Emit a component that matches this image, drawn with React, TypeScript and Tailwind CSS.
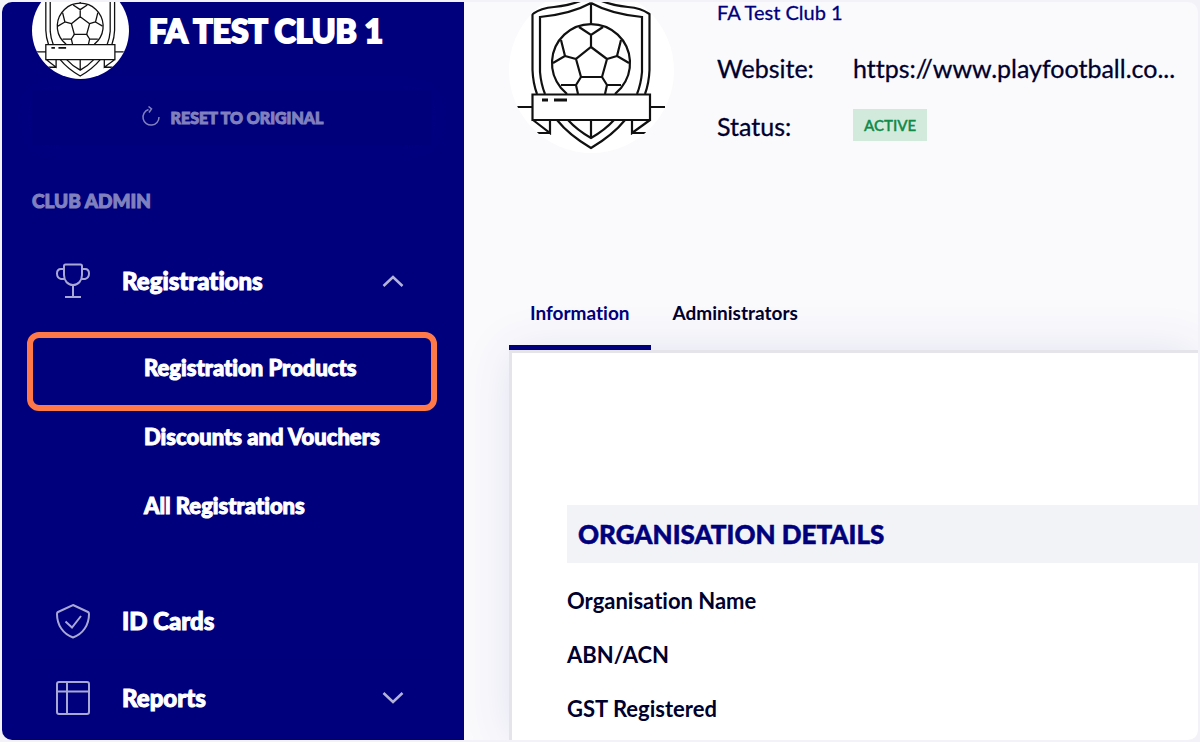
import type { ReactNode } from 'react';
import { clsx } from 'clsx';

const subItems = [
  { label: 'Registration Products', highlighted: true },
  { label: 'Discounts and Vouchers', highlighted: false },
  { label: 'All Registrations', highlighted: false },
];

const details = ['Organisation Name', 'ABN/ACN', 'GST Registered'];

export default function App() {
  return (
    <div className="flex min-h-screen bg-[#f2f2f8] p-[2px] font-['Lato','Open_Sans',sans-serif] [font-variant-ligatures:none]">
      <div className="flex flex-1 overflow-hidden rounded-[10px] bg-[#fafafd]">
        <Sidebar />
        <Organisation />
      </div>
    </div>
  );
}

function Sidebar() {
  return (
    <aside className="w-[462px] shrink-0 bg-[#00007d] pr-8 pl-[30px] text-white [-webkit-text-stroke:1px]">
      <div className="-mt-5 flex items-center gap-5">
        <Crest className="size-[97px]" />
        <h1 className="text-[32px] leading-10 font-black [-webkit-text-stroke:2px]">FA TEST CLUB 1</h1>
      </div>

      <button
        type="button"
        className="mt-[11px] flex h-[55px] w-full items-center justify-center gap-2.5 bg-[#00007a] text-base font-black text-[#8080be] shadow-[0_0_24px_#000084]"
      >
        <ResetIcon />
        RESET TO ORIGINAL
      </button>

      <h2 className="mt-11 text-[19px] leading-6 font-black text-[#8080be]">CLUB ADMIN</h2>

      <nav className="mt-[30px]">
        <NavItem label="Registrations" icon={<TrophyIcon />} chevron="up" />
        <ul className="mt-3.5 mb-[43px]">
          {subItems.map((item) => (
            <li key={item.label} className="relative">
              <a href="#" className="flex h-[69px] items-center pl-28 text-[22px] font-black">
                {item.label}
              </a>
              {item.highlighted && (
                <div className="pointer-events-none absolute -inset-x-[5px] -top-px -bottom-[9px] rounded-xl border-6 border-[#ff7847]"></div>
              )}
            </li>
          ))}
        </ul>
        <NavItem label="ID Cards" icon={<ShieldIcon />} />
        <div className="h-px bg-[#00006c]"></div>
        <NavItem label="Reports" icon={<LayoutIcon />} chevron="down" />
      </nav>
    </aside>
  );
}

function NavItem({ label, icon, chevron }: { label: string; icon: ReactNode; chevron?: 'up' | 'down' }) {
  return (
    <button type="button" className="flex h-[76px] w-full items-center pr-7 pl-6 text-left text-[24px] font-black">
      {icon}
      <span className="ml-8 flex-1">{label}</span>
      {chevron && (
        <svg viewBox="0 0 22 14" className={clsx('w-[22px] fill-none stroke-[#b3b3d8] stroke-[2.5]', chevron === 'down' && 'rotate-180')}>
          <path d="M1.500 12 11 3 20.500 12" />
        </svg>
      )}
    </button>
  );
}

function Organisation() {
  return (
    <main className="flex min-w-0 flex-1 flex-col pl-[45px] text-[#00002e]">
      <div className="flex gap-[43px]">
        <Crest className="-mt-3.5 size-[165px]" />
        <div className="min-w-0 flex-1">
          <a href="#" className="block text-[20px] leading-5 text-[#00007d] [-webkit-text-stroke:0.3px]">FA Test Club 1</a>
          <dl className="mt-[18px] grid auto-rows-[58px] grid-cols-[136px_1fr] items-center text-[25px] [-webkit-text-stroke:0.3px]">
            <dt>Website:</dt>
            <dd className="whitespace-nowrap">https://www.playfootball.co...</dd>
            <dt>Status:</dt>
            <dd className="flex pb-1">
              <span className="flex h-8 items-center bg-[#d1eadc] px-[11px] text-[15px] font-semibold text-[#118a4a]">ACTIVE</span>
            </dd>
          </dl>
        </div>
      </div>

      <div role="tablist" className="mt-[126px] flex text-[19px] leading-6 font-bold">
        <button type="button" role="tab" aria-selected="true" className="h-[68px] border-b-5 border-[#00007d] px-[21px] pb-0.5 text-[#00007d]">
          Information
        </button>
        <button type="button" role="tab" aria-selected="false" className="h-[68px] border-b-5 border-transparent px-[22px] pb-0.5">
          Administrators
        </button>
      </div>

      <section className="flex-1 border-t-3 border-l-3 border-[#e4e4ea] bg-white pt-[152px] pl-[55px] shadow-[0_0_46px_rgba(0,0,125,0.1)]">
        <h2 className="flex h-[58px] items-center bg-[#f2f3f6] pl-[11px] text-[26px] font-black text-[#00007d] [-webkit-text-stroke:0.5px]">
          ORGANISATION DETAILS
        </h2>
        <ul className="mt-2.5 text-[22px] font-bold">
          {details.map((label) => (
            <li key={label} className="flex h-[54px] items-center">{label}</li>
          ))}
        </ul>
      </section>
    </main>
  );
}

function Crest({ className }: { className: string }) {
  return (
    <svg viewBox="0 0 165 165" className={clsx('shrink-0 rounded-full bg-white', className)} fill="none" stroke="#111" strokeWidth="2.2">
      {/* shield */}
      <path d="M82 8Q66 17 45 19Q32 20 23.500 26V82Q24 95 28 106M82 8Q98 17 119 19Q132 20 140.500 26V82Q140 95 136 106" />
      <path d="M82 15Q62 26 31 29V84Q32 96 36 106M82 15Q102 26 133 29V84Q132 96 128 106M82 15V36" />
      <path d="M48 132Q60 147 82 160Q104 147 116 132M59 132Q68 142 82 150Q96 142 105 132M82 132V150" />
      {/* ball */}
      <path d="M52 100A39 39 0 1 1 112 100L106 106M52 100L58 106" />
      <path d="M70 39 82 47 94 39M82 47V59M82 59 98 71 93 89H72L67 71ZM67 71 56 68M52 52 56 68 44 75M98 71 108 68M112 52 108 68 120 75" />
      <path d="M72 89 67 97M52 97H67L69 106M93 89 98 97M112 97H98L96 106" />
      {/* ribbon */}
      <path d="M23.500 106.500H141V132H23.500ZM8 119H23.500M141 119H156M24 132 41 145V132M28 145H41M141 132 123 145V132M137 145H123" />
      <path d="M33 112H39M45 112H58" strokeWidth="3" />
    </svg>
  );
}

function ResetIcon() {
  return (
    <svg viewBox="0 0 20 24" className="h-6 w-5 fill-none stroke-[#8080be] stroke-[1.5]">
      <path d="M7.500 3.500A8 8 0 1 0 18 11" />
      <path d="M7.500 0.500 10.500 3 8 6.500" />
    </svg>
  );
}

function TrophyIcon() {
  return (
    <svg viewBox="0 0 34 36" className="h-9 w-[34px] fill-none stroke-[#a8a8d4] stroke-2">
      <path d="M8 3Q8 1.500 9.500 1.500H24.500Q26 1.500 26 3V12C26 18 22 22 17 22S8 18 8 12Z" />
      <path d="M8 6H5Q1 6 1 10.500T5 16H8.500M26 6H29Q33 6 33 10.500T29 16H25.500M17 22V34M9 34H25" />
    </svg>
  );
}

function ShieldIcon() {
  return (
    <svg viewBox="0 0 34 36" className="h-9 w-[34px] fill-none stroke-[#a8a8d4] stroke-2">
      <path d="M17 2 32 9Q33 9.500 33 11C33 22 27 31 17 34.500C7 31 1 22 1 11Q1 9.500 2 9Z" />
      <path d="M9.500 18.500 16 24.500 25 13" />
    </svg>
  );
}

function LayoutIcon() {
  return (
    <svg viewBox="0 0 34 34" className="size-[34px] fill-none stroke-[#a8a8d4] stroke-2">
      <rect x="1" y="1" width="32" height="32" rx="2" />
      <path d="M11 1V33M1 10.500H33" />
    </svg>
  );
}
